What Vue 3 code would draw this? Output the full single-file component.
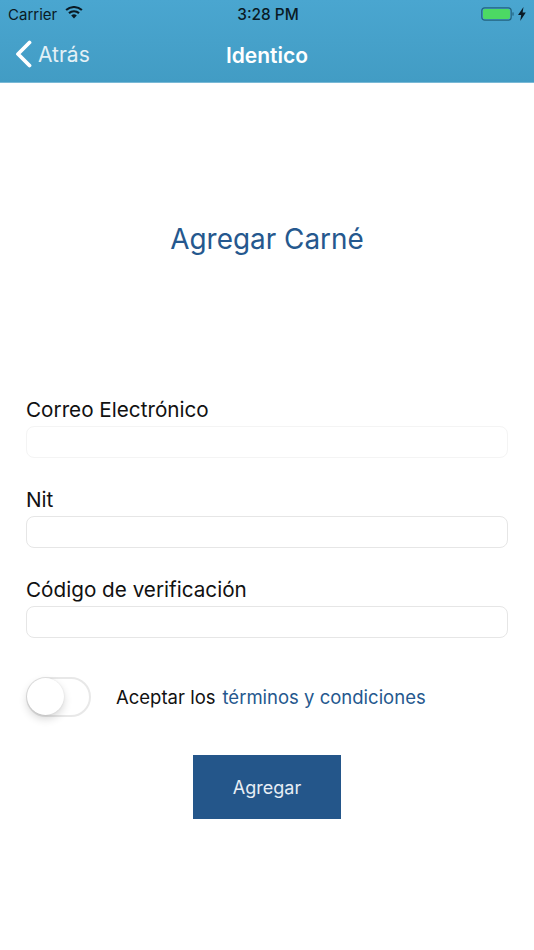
<script setup>
const fields = [
  { label: 'Correo Electrónico', faint: true },
  { label: 'Nit', faint: false },
  { label: 'Código de verificación', faint: false },
]
</script>

<template>
  <div class="page">
    <header class="header">
      <div class="status">
        <div class="status-left">
          <span class="carrier">Carrier</span>
          <svg class="wifi" width="18" height="13" viewBox="0 0 18 13">
            <path d="M9 12.6 6.2 9.5a4.2 4.2 0 0 1 5.6 0z" fill="#0a1a24" />
            <path d="M4.7 7.9a6.5 6.5 0 0 1 8.6 0l1.4-1.6a8.7 8.7 0 0 0-11.4 0z" fill="#0a1a24" />
            <path d="M1.8 4.8a10.9 10.9 0 0 1 14.4 0l1.4-1.6a13.1 13.1 0 0 0-17.2 0z" fill="#0a1a24" />
          </svg>
        </div>
        <span class="time">3:28 PM</span>
        <div class="status-right">
          <svg width="46" height="16" viewBox="0 0 46 16">
            <rect x="0.8" y="1.8" width="29.4" height="12.4" rx="3" fill="none" stroke="#23637f" stroke-width="1.2" />
            <rect x="2" y="3" width="27" height="10" rx="2" fill="#4cd964" />
            <rect x="31.4" y="6.4" width="1.2" height="3.2" fill="#23637f" />
            <path d="M42.5 1 37 9h3.2l-1 6 5.6-8.4h-3.2z" fill="#0a1a24" />
          </svg>
        </div>
      </div>
      <nav class="nav">
        <div class="back">
          <svg width="18" height="28" viewBox="0 0 18 28">
            <path d="M15.5 2.5 4 14 15.5 25.5" fill="none" stroke="#fff" stroke-width="3.8" stroke-linecap="round" stroke-linejoin="round" />
          </svg>
          <span>Atrás</span>
        </div>
        <div class="nav-title">Identico</div>
      </nav>
    </header>

    <main class="main">
      <h1 class="title">Agregar Carné</h1>

      <form class="form" @submit.prevent>
        <div v-for="f in fields" :key="f.label" class="field">
          <label class="label">{{ f.label }}</label>
          <div class="input" :class="{ faint: f.faint }"></div>
        </div>
      </form>

      <div class="terms">
        <div class="switch"><div class="knob"></div></div>
        <span class="accept">Aceptar los</span>
        <span class="link">términos y condiciones</span>
      </div>

      <div class="actions">
        <button class="btn" type="button">Agregar</button>
      </div>
    </main>
  </div>
</template>

<style scoped>
.page {
  width: 534px;
  height: 950px;
  overflow: hidden;
  background: #fff;
  font-family: Inter, "Liberation Sans", sans-serif;
  color: #111;
}
.header {
  height: 83px;
  background: linear-gradient(#4aa6d0, #429cc4);
  box-sizing: border-box;
  border-bottom: 1px solid #79b9d6;
}
.status {
  height: 28px;
  display: flex;
  align-items: center;
  justify-content: space-between;
  padding: 0 7px 0 8px;
  position: relative;
  box-sizing: border-box;
}
.status-left {
  display: flex;
  align-items: center;
  gap: 8px;
}
.carrier {
  font-size: 15px;
  color: #0a1a24;
}
.wifi {
  margin-top: -3px;
}
.time {
  font-size: 15.4px;
  font-weight: 500;
  color: #0a1a24;
  position: absolute;
  left: 2px;
  right: 0;
  text-align: center;
}
.status-right {
  display: flex;
  align-items: center;
}
.nav {
  height: 54px;
  display: flex;
  align-items: center;
  justify-content: center;
  position: relative;
}
.back {
  position: absolute;
  left: 14px;
  top: 12px;
  display: flex;
  align-items: center;
  gap: 6px;
  color: #fff;
  font-size: 21px;
}
.back span {
  opacity: 0.85;
}
.nav-title {
  color: #fff;
  font-size: 21px;
  font-weight: 600;
}
.main {
  display: flex;
  flex-direction: column;
}
.title {
  margin: 0;
  padding-top: 136px;
  height: 40px;
  line-height: 40px;
  text-align: center;
  font-size: 27.9px;
  font-weight: 400;
  color: #25588e;
}
.form {
  margin-top: 138px;
  padding: 0 26px;
  display: flex;
  flex-direction: column;
  gap: 29px;
}
.field {
  display: flex;
  flex-direction: column;
}
.label {
  height: 29px;
  line-height: 26px;
  font-size: 20.7px;
  color: #111;
}
.input {
  height: 32px;
  box-sizing: border-box;
  border: 1.5px solid #e6e6e6;
  border-radius: 8px;
  background: #fff;
}
.input.faint {
  border: 1px solid #f4f4f4;
}
.terms {
  margin-top: 39px;
  padding: 0 26px;
  display: flex;
  align-items: center;
}
.switch {
  width: 65px;
  height: 40px;
  box-sizing: border-box;
  border: 2px solid #e8e8e8;
  border-radius: 20px;
  background: #fff;
  position: relative;
}
.knob {
  position: absolute;
  left: -1px;
  top: -1px;
  width: 37px;
  height: 37px;
  border-radius: 50%;
  background: #fff;
  box-shadow: 0 4px 8px rgba(0, 0, 0, 0.16), 0 0 2px rgba(0, 0, 0, 0.1);
}
.accept {
  margin-left: 25px;
  font-size: 18.5px;
  color: #111;
}
.link {
  margin-left: 7px;
  font-size: 18.5px;
  color: #25588e;
}
.actions {
  margin-top: 38px;
  display: flex;
  justify-content: center;
}
.btn {
  width: 148px;
  height: 64px;
  border: 0;
  background: #24568a;
  color: #e8eef5;
  font-family: inherit;
  font-size: 18px;
}
</style>
